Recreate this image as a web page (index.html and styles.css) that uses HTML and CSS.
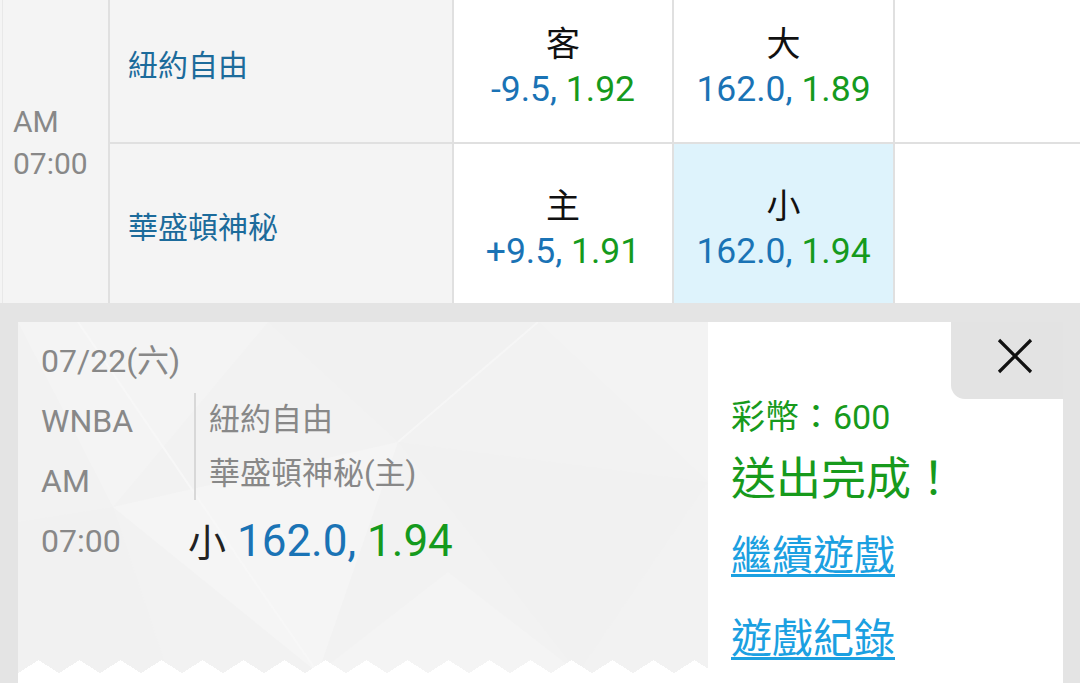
FILE: index.html
```html
<!DOCTYPE html>
<html lang="zh-Hant">
<head>
    <meta charset="UTF-8">
    <meta name="viewport" content="width=device-width, initial-scale=1.0">
    <title>WNBA 下注</title>
    <link rel="stylesheet" href="styles.css">
</head>
<body>
    <!-- Match board -->
    <div class="board">
        <div class="time">AM<br>07:00</div>

        <div class="team">紐約自由</div>
        <div class="odd">
            <span class="pick">客</span>
            <span class="line"><span class="hcap">-9.5,</span> <span class="rate">1.92</span></span>
        </div>
        <div class="odd">
            <span class="pick">大</span>
            <span class="line"><span class="hcap">162.0,</span> <span class="rate">1.89</span></span>
        </div>
        <div class="blank"></div>

        <div class="team">華盛頓神秘</div>
        <div class="odd">
            <span class="pick">主</span>
            <span class="line"><span class="hcap">+9.5,</span> <span class="rate">1.91</span></span>
        </div>
        <div class="odd selected">
            <span class="pick">小</span>
            <span class="line"><span class="hcap">162.0,</span> <span class="rate">1.94</span></span>
        </div>
        <div class="blank"></div>
    </div>

    <!-- Bet slip -->
    <div class="slip">
        <div class="ticket">
            <div class="ticket-info">
                <div class="ticket-face">
                    <svg class="ticket-bg" viewBox="0 0 690 351" preserveAspectRatio="none">
                        <rect width="690" height="351" fill="#f2f2f2"/>
                        <polygon points="0,0 250,0 95,185" fill="#f4f4f4"/>
                        <polygon points="250,0 520,0 380,120" fill="#f1f1f1"/>
                        <polygon points="520,0 690,0 690,160" fill="#f3f3f3"/>
                        <polygon points="95,185 380,120 300,351" fill="#f5f5f5"/>
                        <polygon points="380,120 690,160 560,351" fill="#f1f1f1"/>
                        <polygon points="0,200 95,185 150,351 0,351" fill="#f1f1f1"/>
                        <polygon points="300,351 560,351 430,250" fill="#f4f4f4"/>
                        <polyline points="60,0 230,250 300,351" fill="none" stroke="#f7f7f7" stroke-width="2"/>
                        <polyline points="380,120 520,0" fill="none" stroke="#f6f6f6" stroke-width="2"/>
                    </svg>

                    <div class="info">
                        <div class="date">07/22(六)</div>
                        <div class="meta">
                            <div class="label">WNBA</div>
                            <div class="teams">
                                <div>紐約自由</div>
                                <div>華盛頓神秘(主)</div>
                            </div>
                            <div class="label">AM</div>
                            <div class="label">07:00</div>
                            <div class="bet"><span class="bet-pick">小</span> <span class="hcap">162.0,</span> <span class="rate">1.94</span></div>
                        </div>
                    </div>

                    <div class="zigzag"></div>
                </div>
            </div>

            <div class="ticket-side">
                <button class="close" type="button">
                    <svg width="36" height="36" viewBox="0 0 36 36">
                        <path d="M2 2 L34 34 M34 2 L2 34" stroke="#111" stroke-width="3.2" fill="none"/>
                    </svg>
                </button>
                <p class="coins">彩幣：600</p>
                <p class="done">送出完成！</p>
                <a class="link first" href="#">繼續遊戲</a>
                <a class="link" href="#">遊戲紀錄</a>
            </div>
        </div>
    </div>
</body>
</html>
```
FILE: styles.css
```css
body {
    margin: 0;
    width: 1080px;
    height: 683px;
    overflow: hidden;
    background-color: #e4e4e4;
    font-family: Roboto, "Noto Sans CJK TC", sans-serif;
}

/* match board */
.board {
    display: grid;
    grid-template-columns: 108px 342px 218px 219px 1fr;
    grid-template-rows: 160px 159px;
    gap: 2px;
    margin-top: -18px;
    background-color: #e0e0e0;
}
.time {
    grid-row: span 2;
    display: flex;
    align-items: center;
    padding-left: 13px;
    background-color: #f4f4f4;
    box-shadow: inset 2px 0 0 #f4f4f4, inset 3px 0 0 #e8e8e8;
    color: #888;
    font-size: 30px;
    line-height: 42px;
}
.team {
    display: flex;
    align-items: center;
    padding: 8px 0 0 18px;
    background-color: #f4f4f4;
    color: #1c6b9b;
    font-size: 30px;
    line-height: 40px;
}
.odd {
    display: flex;
    flex-direction: column;
    align-items: center;
    justify-content: center;
    padding-top: 10px;
    background-color: #fff;
}
.odd.selected {
    background-color: #def3fc;
}
.pick {
    color: #111;
    font-size: 34px;
    line-height: 45px;
}
.line {
    font-size: 35.5px;
    line-height: 45px;
}
.blank {
    background-color: #fff;
}
.hcap {
    color: #1a73b5;
}
.rate {
    color: #159a1d;
}

/* bet slip */
.slip {
    padding: 19px 17px 0 18px;
}
.ticket {
    display: flex;
    height: 380px;
}
.ticket-info {
    width: 690px;
    background-color: #fff;
}
.ticket-face {
    position: relative;
    height: 351px;
}
.ticket-bg {
    position: absolute;
    top: 0;
    left: 0;
    width: 100%;
    height: 100%;
}
.zigzag {
    position: absolute;
    left: 0;
    right: 0;
    bottom: 0;
    height: 13px;
    background: conic-gradient(at 50% 0, transparent 123deg, #fff 123deg 237deg, transparent 237deg) 0 0 / 41px 13px repeat-x;
}
.info {
    position: relative;
    padding: 9px 0 0 23px;
    color: #888;
}
.date {
    font-size: 32px;
    line-height: 60px;
}
.meta {
    display: grid;
    grid-template-columns: 147px 1fr;
    grid-template-rows: 60px 60px 60px;
}
.label {
    font-size: 32px;
    line-height: 60px;
}
.teams {
    grid-row: span 2;
    align-self: start;
    height: 107px;
    margin: 2px 0 0 6px;
    padding-left: 13px;
    border-left: 2px solid #d8d8d8;
    font-size: 31px;
    line-height: 53.5px;
}
.bet {
    font-size: 44px;
    line-height: 60px;
    white-space: nowrap;
}
.bet-pick {
    color: #222;
    font-size: 38px;
}

.ticket-side {
    display: flex;
    flex-direction: column;
    align-items: flex-start;
    width: 355px;
    padding-left: 23px;
    box-sizing: border-box;
    background-color: #fff;
}
.close {
    align-self: flex-end;
    width: 112px;
    height: 77px;
    padding: 16px 30px 25px 46px;
    border: none;
    border-bottom-left-radius: 14px;
    background-color: #e3e3e3;
}
.close svg {
    display: block;
}
.coins {
    margin: 0;
    color: #179a1c;
    font-size: 34px;
    line-height: 36px;
}
.done {
    margin: 15px 0 0;
    color: #179a1c;
    font-size: 45px;
    line-height: 60px;
}
.link {
    display: block;
    margin-top: 23px;
    color: #1ba0e1;
    font-size: 41px;
    line-height: 60px;
    text-decoration-thickness: 3px;
    text-underline-offset: 4px;
}
.link.first {
    margin-top: 16px;
}
```
